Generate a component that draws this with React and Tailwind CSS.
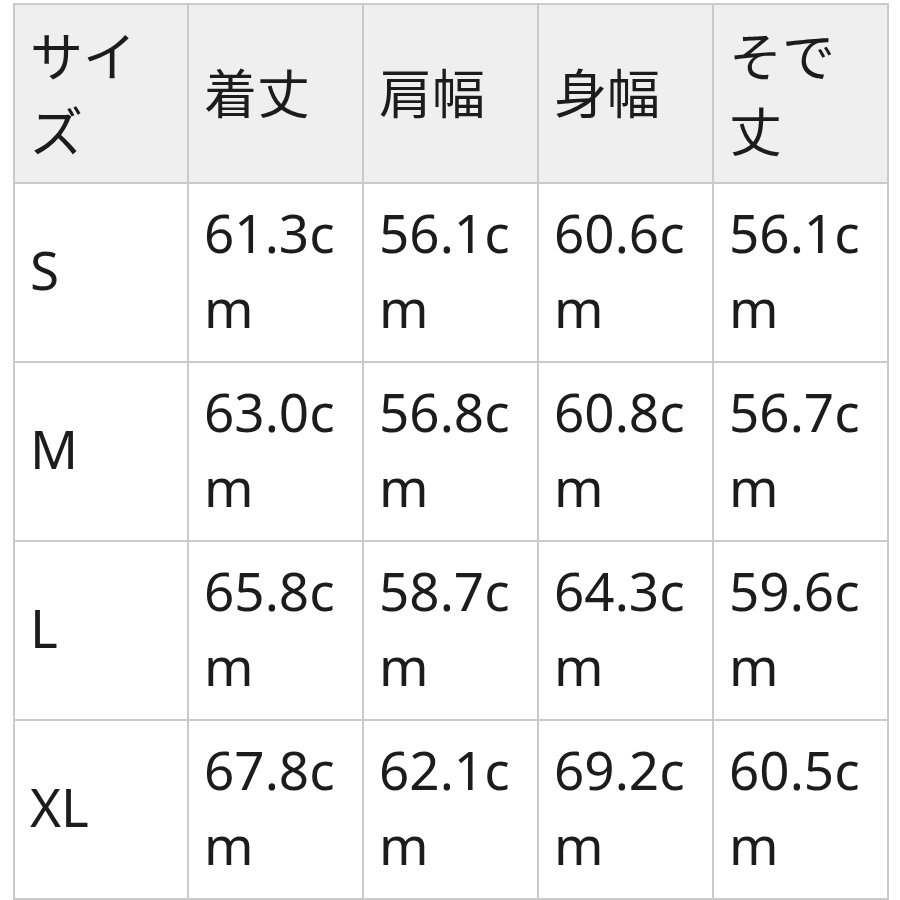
import React from "react";

const HEAD = ["サイズ", "着丈", "肩幅", "身幅", "そで丈"];

const ROWS = [
  ["S", "61.3cm", "56.1cm", "60.6cm", "56.1cm"],
  ["M", "63.0cm", "56.8cm", "60.8cm", "56.7cm"],
  ["L", "65.8cm", "58.7cm", "64.3cm", "59.6cm"],
  ["XL", "67.8cm", "62.1cm", "69.2cm", "60.5cm"],
];

export default function App() {
  return (
    <div
      className="w-[900px] h-[900px] bg-white pl-[13px] pt-[3px] text-[#1c1c1c]"
      style={{ fontFamily: '"Noto Sans", "Noto Sans CJK JP", sans-serif' }}
    >
      <table className="border-collapse table-fixed w-[874px] text-[53px] leading-[75px]">
        <colgroup>
          <col className="w-[174px]" />
          <col className="w-[175px]" />
          <col className="w-[175px]" />
          <col className="w-[175px]" />
          <col className="w-[175px]" />
        </colgroup>
        <thead>
          <tr className="h-[179px] bg-[#efefef]">
            {HEAD.map((h) => (
              <th
                key={h}
                className="border-2 border-[#cacaca] px-[15px] text-left align-middle font-normal break-all"
              >
                {h}
              </th>
            ))}
          </tr>
        </thead>
        <tbody>
          {ROWS.map((row) => (
            <tr key={row[0]} className="h-[179px]">
              {row.map((v, i) => (
                <td
                  key={i}
                  className="border-2 border-[#cacaca] px-[15px] pb-[6px] align-middle break-all"
                >
                  {v}
                </td>
              ))}
            </tr>
          ))}
        </tbody>
      </table>
    </div>
  );
}
